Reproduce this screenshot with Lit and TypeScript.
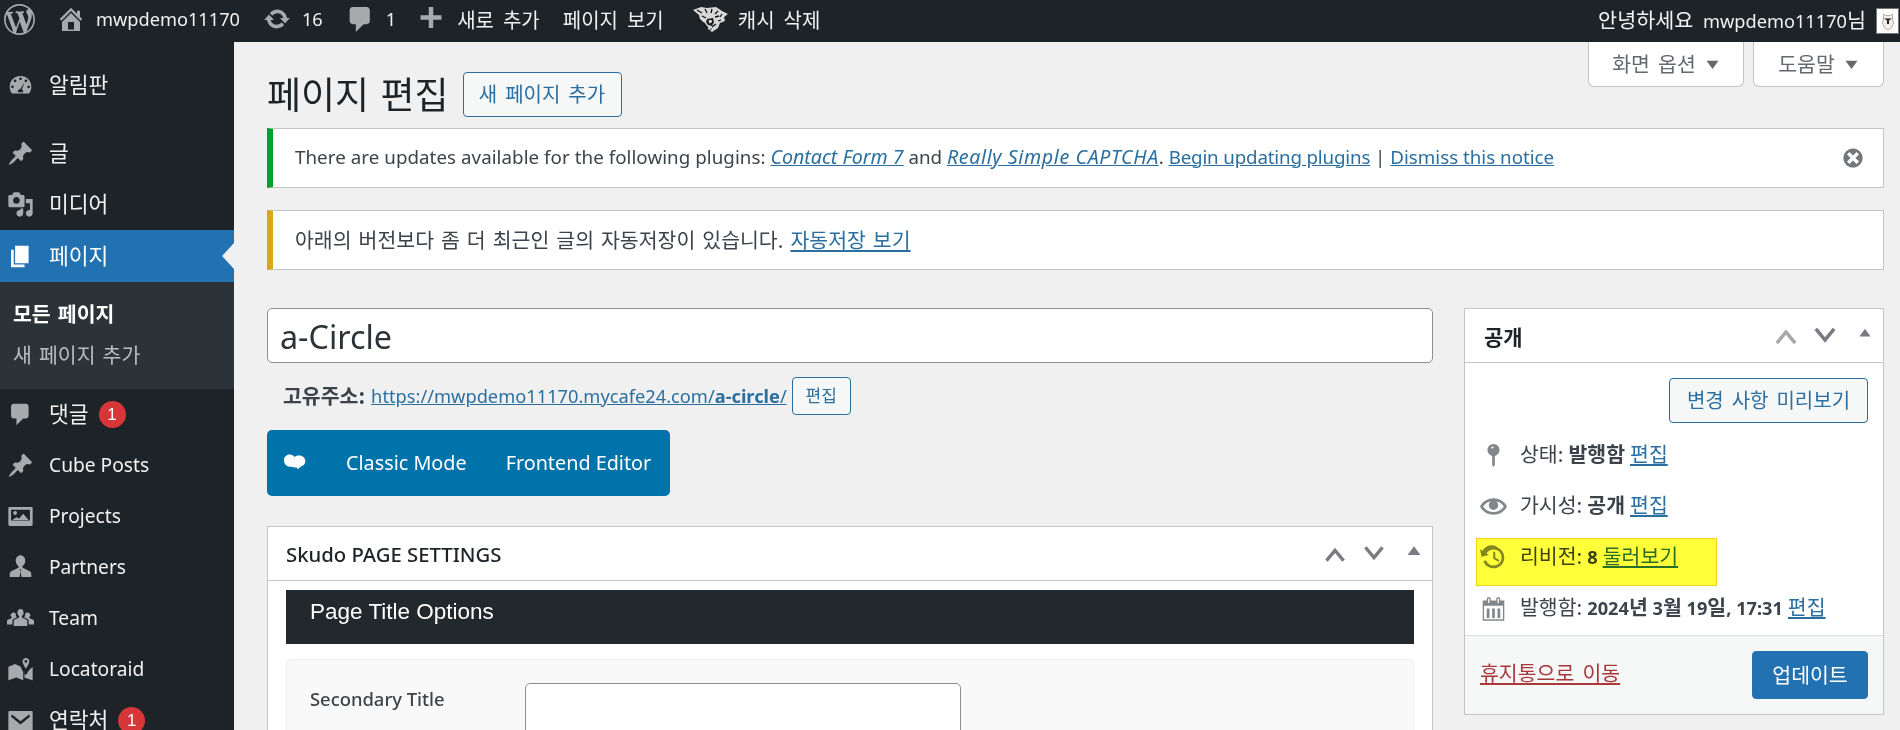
import { LitElement, html, css, svg } from "lit";
import { customElement } from "lit/decorators.js";

const P: Record<string, string> = {
  wp: "M20 10c0-5.51-4.49-10-10-10C4.480 0 0 4.490 0 10c0 5.520 4.480 10 10 10 5.510 0 10-4.480 10-10zM7.780 15.370L4.370 6.220c.550-.020 1.170-.080 1.170-.080.500-.060.440-1.130-.060-1.110 0 0-1.450.110-2.370.110-.180 0-.370 0-.580-.010C4.120 2.690 6.890 1.110 10 1.110c2.320 0 4.430.880 6.020 2.320-.670-.110-1.620.390-1.620 1.540 0 .640.390 1.180.780 1.820.310.530.480 1.180.480 2.130 0 1.290-1.210 4.330-1.210 4.330l-2.620-7.220c.470-.020.720-.150.720-.150.500-.050.440-1.250-.060-1.220 0 0-1.440.120-2.370.12-.850 0-2.300-.120-2.300-.120-.5-.030-.56 1.200-.060 1.220l.920.080 1.260 3.410zM17.410 10c.240-.640.740-1.870.430-4.250.700 1.290 1.050 2.710 1.050 4.250 0 3.290-1.730 6.240-4.400 7.780.970-2.590 1.940-5.200 2.920-7.780zM6.100 18.090C3.120 16.650 1.110 13.530 1.110 10c0-1.300.230-2.480.72-3.590C3.250 10.300 4.670 14.200 6.100 18.090zm4.030-6.630l2.580 6.980c-.850.290-1.770.450-2.710.450-.790 0-1.570-.110-2.290-.330.810-2.380 1.620-4.740 2.420-7.100z",
  home: "M16 8.500l1.530 1.530-1.060 1.060L10 4.620l-6.470 6.470-1.060-1.060L10 2.500l4 4v-2h2v4zm-6-2.460l6 5.990V18H4v-5.970zM12 17v-5H8v5h4z",
  sync: "M10.200 3.280c3.530 0 6.430 2.610 6.920 6h2.080l-3.500 4-3.500-4h2.320c-.450-1.970-2.210-3.440-4.320-3.440-1.450 0-2.730.710-3.540 1.780L4.950 5.660C6.230 4.200 8.110 3.280 10.200 3.280zm-.400 13.440c-3.520 0-6.430-2.610-6.920-6H.800l3.500-4c1.170 1.330 2.330 2.670 3.500 4H5.480c.450 1.970 2.210 3.440 4.320 3.440 1.450 0 2.730-.710 3.540-1.780l1.710 1.950c-1.280 1.460-3.150 2.390-5.250 2.390z",
  comment: "M5 2h9c1.100 0 2 .9 2 2v7c0 1.100-.9 2-2 2h-2l-5 5v-5H5c-1.100 0-2-.9-2-2V4c0-1.100.9-2 2-2z",
  plus: "M17 7.500v3h-5.500V16h-3v-5.500H3v-3h5.500V2h3v5.500z",
  gauge: "M3.760 16h12.480C17.340 14.570 18 12.790 18 10.860 18 6.210 14.420 3 10 3S2 6.210 2 10.860C2 12.790 2.660 14.570 3.760 16zM10 4c.55 0 1 .45 1 1s-.45 1-1 1-1-.45-1-1 .45-1 1-1zM6 5.500c.55 0 1 .45 1 1s-.45 1-1 1-1-.45-1-1 .45-1 1-1zm8 0c.55 0 1 .45 1 1s-.45 1-1 1-1-.45-1-1 .45-1 1-1zM4 10c.55 0 1 .45 1 1s-.45 1-1 1-1-.45-1-1 .45-1 1-1zm12 0c.55 0 1 .45 1 1s-.45 1-1 1-1-.45-1-1 .45-1 1-1zm-3-2.500l-1.900 5.200c.55.400.9 1 .9 1.700 0 .15-.02.4-.05.6H8.050C8.020 15 8 14.750 8 14.400c0-1.050.85-1.900 1.900-1.900z",
  pin: "M10.440 3.020l1.820-1.820 6.360 6.350-1.830 1.820c-1.050-.680-2.480-.570-3.410.360l-.750.750c-.920.930-1.040 2.350-.350 3.400l-1.830 1.820-2.410-2.410-2.800 2.790c-.420.420-3.380 2.710-3.800 2.290s1.860-3.390 2.280-3.810l2.790-2.790L4.100 9.360l1.830-1.820c1.050.690 2.480.570 3.400-.360l.750-.750c.930-.920 1.050-2.350.360-3.410z",
  media: "M13 11V4c0-.550-.450-1-1-1h-1.670L9 1H5L3.670 3H2c-.550 0-1 .450-1 1v7c0 .550.450 1 1 1h10c.550 0 1-.450 1-1zM7 4.500c1.380 0 2.500 1.120 2.500 2.500S8.380 9.500 7 9.500 4.500 8.380 4.500 7 5.620 4.500 7 4.500zM14 6h5v10.500c0 1.380-1.120 2.500-2.500 2.500S14 17.880 14 16.500s1.120-2.500 2.500-2.500c.170 0 .340.020.5.050V9h-3V6zm-4 8.050V13h2v3.500c0 1.380-1.120 2.500-2.500 2.500S7 17.880 7 16.500 8.120 14 9.500 14c.170 0 .340.020.5.050z",
  page: "M6 15V2h10v13H6zm-1 1h8v2H3V5h2v11z",
  image: "M2 3h16c.6 0 1 .4 1 1v12c0 .6-.4 1-1 1H2c-.6 0-1-.4-1-1V4c0-.6.4-1 1-1zM3 5v8h14V5zM6 6c.8 0 1.400.6 1.400 1.400S6.800 8.800 6 8.800 4.600 8.200 4.600 7.400 5.200 6 6 6zM4 12.500l3-2 2 1 3-3.500 4 4.500z",
  man: "M10 1c2 0 3.500 1.700 3.500 4 0 1.700-.8 3.200-2 3.900v1.300l5 2.300c1 .5 1.500 1.500 1.500 2.500v2H2v-2c0-1 .5-2 1.500-2.500l5-2.300V8.900c-1.200-.7-2-2.200-2-3.900 0-2.300 1.500-4 3.500-4zM9.300 11.500l.7 1.200-.7 4.300h1.400l-.7-4.300.7-1.200z",
  team: "M10 3c1.300 0 2.300 1.200 2.300 2.700 0 1.100-.5 2-1.300 2.500v1l3.200 1.500c.5.200.8.700.8 1.300v3.500H5v-3.500c0-.6.300-1.100.8-1.300L9 9.200v-1C8.300 7.700 7.700 6.800 7.700 5.700 7.700 4.200 8.700 3 10 3zM4.800 5.500c.7 0 1.300.4 1.700 1-.1 1 .2 2 .8 2.700l-2.200 1c-.7.300-1.100 1-1.100 1.700v2.600H0V12c0-.5.300-.9.700-1l2.800-1.300v-.8C2.900 8.400 2.500 7.700 2.500 7.900 2.700 6.500 3.700 5.500 4.800 5.500zm10.400 0c1.100 0 2.100 1 2.300 2.400 0-.2-.4.500-1 1v.8l2.800 1.300c.4.100.7.500.7 1v2.500h-4v-2.600c0-.7-.4-1.400-1.100-1.700l-2.200-1c.6-.7.900-1.700.8-2.700.4-.6 1-1 1.700-1z",
  map: "M14 1.500c1.400 0 2.500 1.100 2.500 2.500 0 1.200-1.500 3.700-2.500 5.500-1-1.800-2.500-4.300-2.500-5.500 0-1.400 1.100-2.500 2.500-2.500zm0 1.500c-.6 0-1 .4-1 1s.4 1 1 1 1-.4 1-1-.4-1-1-1zM1 8l5-2 4 1.700c.4 1.200 1.200 2.600 2 4V18l-5-2-6 2zm12 4.700c.4.600.7 1 1 1.500.5-.7 1.300-2 2-3.300L19 8v10l-6-1.800z",
  mail: "M2 3h16c.6 0 1 .4 1 1v13c0 .6-.4 1-1 1H2c-.6 0-1-.4-1-1V4c0-.6.400-1 1-1zm1.800 2.500L2.800 7l7.200 6 7.200-6-1-1.500L10 10.500z",
  dismiss: "M10 2c4.420 0 8 3.580 8 8s-3.580 8-8 8-8-3.580-8-8 3.580-8 8-8zm5 11l-3-3 3-3-2-2-3 3-3-3-2 2 3 3-3 3 2 2 3-3 3 3z",
  status: "M14.500 6c0-2.400-2-4.500-4.500-4.500S5.500 3.600 5.500 6c0 2 1.400 3.800 3.500 4.300V17l1 1.500 1-1.500v-6.700c2.100-.5 3.500-2.300 3.500-4.300zM8 4.200c.6-.6 1.300-.9 2-.9v1.200c-.4 0-.8.200-1.100.5z",
  eye: "M19.700 9.400C17.700 6 14 3.900 10 3.900S2.300 6 .3 9.400L0 10l.3.600c2 3.400 5.700 5.500 9.700 5.500s7.700-2.100 9.700-5.500l.3-.6-.3-.6zM10 14.100c-3.100 0-6-1.600-7.700-4.100C3.600 8 5.700 6.600 8 6.100c-.9.600-1.500 1.700-1.500 2.900 0 1.900 1.600 3.500 3.500 3.500s3.500-1.600 3.500-3.500c0-1.200-.6-2.300-1.500-2.900 2.300.5 4.400 1.900 5.700 3.900-1.700 2.500-4.600 4.100-7.700 4.100z",
  backup: "M13.650 2.880c3.930 2.010 5.480 6.820 3.470 10.750s-6.830 5.480-10.760 3.470c-1.870-.960-3.200-2.540-3.860-4.360l1.880-.700c.510 1.370 1.500 2.560 2.890 3.270 2.940 1.510 6.560.340 8.060-2.600 1.510-2.940.340-6.560-2.600-8.060-2.880-1.480-6.390-.390-7.950 2.440L6.620 8.100l-5.500 1.400L0 3.840l1.880 1.120C3.970 1.360 8.300-.080 11.880 1.750zM9.800 5.800h1.500v4.260l3.100 1.770-.75 1.300-3.850-2.210z",
  cal: "M15 4h3v15H2V4h3V3c0-.41.15-.76.44-1.060.29-.29.64-.44 1.060-.44s.77.15 1.060.44c.29.3.44.65.44 1.060v1h4V3c0-.41.15-.76.44-1.060.29-.29.64-.44 1.060-.44s.77.15 1.060.44c.29.3.44.65.44 1.060v1zM6 3v2.500c0 .14.05.26.15.35.09.1.21.15.35.15s.26-.05.35-.15c.1-.09.15-.21.15-.35V3c0-.14-.05-.26-.15-.35-.09-.1-.21-.15-.35-.15s-.26.05-.35.15c-.1.09-.15.21-.15.35zm7 0v2.500c0 .14.05.26.14.35.1.1.22.15.36.15s.26-.05.36-.15c.09-.09.14-.21.14-.35V3c0-.14-.05-.26-.14-.35-.1-.1-.22-.15-.36-.15s-.26.05-.36.15c-.09.09-.14.21-.14.35zm4 15V8H3v10h14zM5 10h2v7H5zm4 0h2v7H9zm4 0h2v7h-2z",
  up: "M3 14L10 5.500 17 14l-1.800 1.500L10 9.200l-5.200 6.300z",
  down: "M3 6L10 14.500 17 6l-1.800-1.500L10 10.800 4.800 4.500z",
  tri: "M10 4l8 11H2z",
  triDown: "M10 16L2 5h16z",
  cloud: "M6.500 4.500c1.300 0 2.300.6 3 1.500.7-.6 1.600-.9 2.700-.9 2.200 0 3.800 1.500 3.800 3.400 0 1.800-1.200 3-3 3.400l-1.500 1.600-1-1.200c-.9.200-2 .2-2.700-.3C5 12.300 3 10.500 3 8c0-2 1.500-3.500 3.500-3.500z",
};

const icon = (name: string, cls = "") =>
  html`<svg class="ic ${cls}" viewBox="0 0 20 20" aria-hidden="true">${svg`<path d=${P[name]}></path>`}</svg>`;

@customElement("app-root")
export class AppRoot extends LitElement {
  static styles = css`
    :host {
      display: block;
      width: 1900px;
      height: 730px;
      overflow: hidden;
      position: relative;
      background: #f0f0f1;
      font-family: "Noto Sans", "Noto Sans CJK KR", sans-serif;
      color: #3c434a;
      font-size: 18px;
    }
    a { color: #2a6f9f; text-decoration: underline; }
    .ic { fill: currentColor; display: block; flex: none; }
    .ko { font-family: "Noto Sans CJK KR", sans-serif; font-size: 20.5px; word-spacing: 3.5px; }

    .bar { height: 42px; box-sizing: border-box; padding-bottom: 4px; background: #1d2327; color: #f0f0f1; display: flex; align-items: center; font-size: 18.2px; white-space: nowrap; }
    .bar .ic { color: #a7aaad; }
    .bar .ko { font-size: 20px; word-spacing: 4.5px; }
    .bar-r { margin-left: auto; display: flex; align-items: center; }
    .wp { width: 31px; height: 31px; margin-left: 4px; }
    .home { width: 30px; height: 30px; margin-left: 21px; }
    .site { margin-left: 10px; }
    .sync { width: 28px; height: 28px; margin-left: 23px; }
    .n16 { margin-left: 11px; }
    .cmt { width: 31px; height: 31px; margin-left: 22px; }
    .n1 { margin-left: 10px; }
    .plus { width: 30px; height: 30px; margin-left: 20px; }
    .add { margin-left: 11px; }
    .view { margin-left: 23px; }
    .tiger { margin-left: 29px; width: 35px; height: 26px; flex: none; }
    .cache { margin-left: 10px; }
    .hello { margin-right: 10px; word-spacing: 5px; }
    .bar .hello .ko { font-size: 20.7px; }
    .avatar { width: 23px; height: 26px; margin: 4px 1px 0 0; background: #fff; border: 1px solid #777; box-sizing: border-box; display: flex; justify-content: center; align-items: center; }

    .wrap { display: flex; height: 688px; }
    .side { width: 234px; flex: none; background: #1d2327; padding-top: 18px; box-sizing: border-box; }
    .it { height: 51px; display: flex; align-items: center; color: #f0f0f1; font-size: 19.2px; position: relative; }
    .it .ko { font-size: 21.5px; margin-bottom: 4px; }
    .it .lat { margin-bottom: 2px; }
    .it .ic { width: 27px; height: 27px; color: #a7aaad; margin-left: 7px; margin-right: 15px; }
    .sep { margin-bottom: 17px; }
    .it.on { background: #2271b1; color: #fff; height: 52px; }
    .it.on .ic { color: #fff; }
    .it.on::after { content: ""; position: absolute; right: 0; top: 13px; border: 13px solid transparent; border-right: 12px solid #f0f0f1; border-left: 0; }
    .sub { background: #2c3338; height: 107px; box-sizing: border-box; padding: 17px 0 0 13px; display: flex; flex-direction: column; gap: 13px; color: rgba(240,246,252,.7); }
    .sub span { line-height: 28px; word-spacing: 2.5px; }
    .sub .cur { color: #fff; font-weight: 700; }
    .badge { margin-left: 10px; width: 27px; height: 27px; border-radius: 50%; background: #d63638; color: #fff; font-size: 17px; display: flex; align-items: center; justify-content: center; font-family: "Liberation Sans", sans-serif; }

    .main { flex: 1; min-width: 0; padding: 0 16px 0 33px; position: relative; }
    .tabs { position: absolute; top: 0; right: 16px; display: flex; gap: 9px; }
    .tab { height: 45px; box-sizing: border-box; padding-bottom: 3px; background: #fff; border: 1px solid #c3c4c7; border-top: 0; border-radius: 0 0 6px 6px; color: #646970; display: flex; align-items: center; justify-content: center; gap: 9px; }
    .tab.a { width: 156px; }
    .tab.b { width: 131px; }
    .tab .ic { width: 15px; height: 15px; margin-top: 3px; }
    .head { display: flex; align-items: center; height: 86px; box-sizing: border-box; padding-top: 16px; gap: 14px; }
    h1.ko { margin: 0; font-weight: 400; font-size: 37px; word-spacing: 3px; color: #1d2327; line-height: 1.2; }
    .btn { box-sizing: border-box; padding-bottom: 3px; display: flex; align-items: center; justify-content: center; border: 1px solid #2a6f9f; background: #f6f7f7; color: #2a6f9f; border-radius: 4px; white-space: nowrap; }
    .newp.ko { width: 159px; height: 45px; margin-top: 3px; font-size: 20px; }
    .notice { box-sizing: border-box; height: 60px; background: #fff; border: 1px solid #c3c4c7; border-left: 6px solid #00a32a; display: flex; align-items: center; padding-left: 22px; font-size: 18.75px; margin-bottom: 22px; }
    .notice > span { margin-bottom: 4px; }
    .notice .lead { letter-spacing: .05px; }
    .notice .begin { letter-spacing: -.17px; }
    .notice.warn { border-left-color: #dba617; margin-bottom: 38px; }
    .notice.warn > span { margin-bottom: 2px; word-spacing: 2.4px; }
    .notice em { font-style: italic; font-size: 19.6px; }
    .notice em.w { letter-spacing: .62px; }
    .notice .x { width: 24px; height: 24px; margin-left: auto; margin-right: 18px; color: #72777c; }

    .cols { display: flex; gap: 31px; }
    .left { flex: 1; min-width: 0; }
    .right { width: 420px; flex: none; }
    .title { box-sizing: border-box; height: 55px; background: #fff; border: 1px solid #8c8f94; border-radius: 5px; display: flex; align-items: center; padding-left: 12px; font-size: 32.3px; color: #2c3338; }
    .perma { display: flex; align-items: center; height: 38px; margin: 14px 0 15px 16px; font-size: 18.25px; white-space: nowrap; }
    .perma b { font-weight: 700; margin: 0 6px 3px 0; }
    .perma a { margin-bottom: 2px; }
    .perma .sm { width: 59px; height: 38px; margin-left: 5px; }
    .perma .sm.ko { font-size: 17px; }
    .ve { width: 403px; height: 66px; background: #0073aa; border-radius: 5px; display: flex; align-items: center; color: #fff; font-size: 19.8px; white-space: nowrap; margin-bottom: 30px; }
    .ve .ic { width: 33px; height: 33px; margin-left: 12px; }
    .ve .c { margin: 0 0 2px 34px; }
    .ve .f { margin: 0 0 2px 39px; }
    .box { background: #fff; border: 1px solid #c3c4c7; box-sizing: border-box; }
    .bh { height: 54px; box-sizing: border-box; border-bottom: 1px solid #c3c4c7; display: flex; align-items: center; color: #1d2327; font-size: 20.3px; font-weight: 500; padding-left: 18px; }
    .ctl { margin-left: auto; display: flex; align-items: center; color: #787c82; }
    .ctl .ic { width: 28px; height: 28px; margin-left: 11px; }
    .ctl .ic.dim { color: #a7aaad; }
    .ctl .ic.t { width: 16px; height: 16px; margin: -6px 10px 0 18px; }
    .opts { background: #23282d; height: 54px; margin: 9px 18px 15px; color: #fff; font-family: "Liberation Sans", sans-serif; font-size: 22.5px; display: flex; align-items: center; padding: 0 24px 10px; box-sizing: border-box; }
    .field { margin: 0 18px; height: 100px; background: #f9f9f9; border: 1px solid #eee; border-radius: 5px 5px 0 0; padding: 23px 0 0 23px; box-sizing: border-box; display: flex; }
    .field span { width: 215px; font-size: 18.4px; line-height: 32px; color: #3c434a; font-weight: 500; }
    .field i { display: block; width: 436px; height: 70px; background: #fff; border: 1px solid #8c8f94; border-radius: 5px; box-sizing: border-box; }

    .pub { height: 407px; display: flex; flex-direction: column; }
    .pub .bh { padding-left: 19px; }
    .pub .bh .ko { font-size: 21px; font-weight: 700; }
    .pub .ctl .ic { margin-left: 9px; width: 30px; height: 30px; }
    .pub .ctl .ic.t { margin: -5px 11px 0 18px; width: 14px; height: 14px; }
    .pb { flex: 1; padding: 15px 15px 0; position: relative; }
    .prev.ko { margin-left: auto; width: 199px; height: 45px; font-size: 20px; }
    .rows { margin-top: 7px; }
    .row { height: 51px; display: flex; align-items: center; font-size: 18.2px; white-space: nowrap; }
    .row .ic { width: 27px; height: 27px; color: #82878c; margin-right: 13px; }
    .tx { margin-bottom: 6px; }
    .row b { margin: 0 5px; }
    .mark { position: absolute; left: 11px; top: 175px; width: 241px; height: 48px; box-sizing: border-box; background: #ffff3a; border: 1px solid #f2d21a; mix-blend-mode: multiply; }
    .pf { height: 79px; box-sizing: border-box; background: #f6f7f7; border-top: 1px solid #dcdcde; display: flex; align-items: center; justify-content: space-between; padding: 0 15px; }
    .pf a { color: #a8383a; margin-bottom: 6px; }
    .upd { width: 116px; height: 48px; background: #2271b1; color: #fff; border-color: #2271b1; }
  `;

  private navItem(ic: string, label: string) {
    return html`<div class="it">${icon(ic)}<span class="lat">${label}</span></div>`;
  }

  render() {
    return html`
      <div class="bar">
        ${icon("wp", "wp")}
        ${icon("home", "home")}
        <span class="site">mwpdemo11170</span>
        ${icon("sync", "sync")}
        <span class="n16">16</span>
        ${icon("comment", "cmt")}
        <span class="n1">1</span>
        ${icon("plus", "plus")}
        <span class="add ko">새로 추가</span>
        <span class="view ko">페이지 보기</span>
        <svg class="tiger" viewBox="0 0 35 26" aria-hidden="true">
          <path d="M0 4L8 1l6 1 9-1 6 4 6 3-4 3 1 4-5 2-2 5-6 4-4-3-3-6-5-3-1-5z" fill="#d8d8d8"></path>
          <g fill="none" stroke="#111" stroke-width="1.300">
            <path d="M4 4l5 3M12 3l2 4M19 3l-1 4M25 5l-3 3M9 10l4 2M22 11l4-1M29 8l-2 3M6 13l3 3M28 14l-3 1M23 18l-4 3M12 19l3 3"></path>
          </g>
          <path d="M14 13l6-1 1 4-2 4-4-1-2-3z" fill="#1a1a1a"></path>
          <path d="M15.500 14.500l3-.5.5 2-2.500 1.500z" fill="#eee"></path>
          <path d="M16 23l3-1-1 3z" fill="#666"></path>
        </svg>
        <span class="cache ko">캐시 삭제</span>
        <div class="bar-r">
          <span class="hello"><span class="ko">안녕하세요</span> mwpdemo11170<span class="ko">님</span></span>
          <div class="avatar">
            <svg width="16" height="20" viewBox="0 0 16 20" aria-hidden="true">
              <path d="M3.500 3l2 1.500h5l2-1.500v5l1 4-2 5-3.500 2-3.500-2-2-5 1-4z" fill="#f2f0e8" stroke="#b5b09e" stroke-width="1"></path>
              <path d="M4 7.500h8L9 9.500v3.500H7V9.500z" fill="#1d2327"></path>
            </svg>
          </div>
        </div>
      </div>
      <div class="wrap">
        <nav class="side">
          <div class="it sep">${icon("gauge")}<span class="ko">알림판</span></div>
          <div class="it">${icon("pin")}<span class="ko">글</span></div>
          <div class="it">${icon("media")}<span class="ko">미디어</span></div>
          <div class="it on">${icon("page")}<span class="ko">페이지</span></div>
          <div class="sub">
            <span class="cur ko">모든 페이지</span>
            <span class="ko">새 페이지 추가</span>
          </div>
          <div class="it">${icon("comment")}<span class="ko">댓글</span><span class="badge">1</span></div>
          ${this.navItem("pin", "Cube Posts")}
          ${this.navItem("image", "Projects")}
          ${this.navItem("man", "Partners")}
          ${this.navItem("team", "Team")}
          ${this.navItem("map", "Locatoraid")}
          <div class="it">${icon("mail")}<span class="ko">연락처</span><span class="badge">1</span></div>
        </nav>
        <main class="main">
          <div class="tabs">
            <div class="tab a ko">화면 옵션 ${icon("triDown")}</div>
            <div class="tab b ko">도움말 ${icon("triDown")}</div>
          </div>
          <div class="head">
            <h1 class="ko">페이지 편집</h1>
            <div class="btn newp ko">새 페이지 추가</div>
          </div>
          <div class="notice">
            <span><span class="lead">There are updates available for the following plugins:</span> <a href="#"><em>Contact Form 7</em></a> and <a href="#"><em class="w">Really Simple CAPTCHA</em></a>. <a class="begin" href="#">Begin updating plugins</a> | <a href="#">Dismiss this notice</a></span>
            ${icon("dismiss", "x")}
          </div>
          <div class="notice warn">
            <span class="ko">아래의 버전보다 좀 더 최근인 글의 자동저장이 있습니다. <a href="#">자동저장 보기</a></span>
          </div>
          <div class="cols">
            <div class="left">
              <div class="title">a-Circle</div>
              <div class="perma">
                <b class="ko">고유주소:</b>
                <a href="#">https://mwpdemo11170.mycafe24.com/<strong>a-circle</strong>/</a>
                <div class="btn sm ko">편집</div>
              </div>
              <div class="ve">
                ${icon("cloud")}
                <span class="c">Classic Mode</span>
                <span class="f">Frontend Editor</span>
              </div>
              <div class="box">
                <div class="bh">
                  <span>Skudo PAGE SETTINGS</span>
                  <div class="ctl">${icon("up")}${icon("down")}${icon("tri", "t")}</div>
                </div>
                <div class="opts">Page Title Options</div>
                <div class="field"><span>Secondary Title</span><i></i></div>
              </div>
            </div>
            <div class="right">
              <div class="box pub">
                <div class="bh">
                  <span class="ko">공개</span>
                  <div class="ctl">${icon("up", "dim")}${icon("down")}${icon("tri", "t")}</div>
                </div>
                <div class="pb">
                  <div class="btn prev ko">변경 사항 미리보기</div>
                  <div class="rows">
                    <div class="row">${icon("status")}<span class="tx"><span class="ko">상태:</span><b class="ko">발행함</b><a class="ko" href="#">편집</a></span></div>
                    <div class="row">${icon("eye")}<span class="tx"><span class="ko">가시성:</span><b class="ko">공개</b><a class="ko" href="#">편집</a></span></div>
                    <div class="row">${icon("backup")}<span class="tx"><span class="ko">리비전:</span><b>8</b><a class="ko" href="#">둘러보기</a></span></div>
                    <div class="row">${icon("cal")}<span class="tx"><span class="ko">발행함:</span><b>2024<span class="ko">년</span> 3<span class="ko">월</span> 19<span class="ko">일</span>, 17:31</b><a class="ko" href="#">편집</a></span></div>
                  </div>
                  <div class="mark"></div>
                </div>
                <div class="pf">
                  <a class="ko" href="#">휴지통으로 이동</a>
                  <div class="btn upd ko">업데이트</div>
                </div>
              </div>
            </div>
          </div>
        </main>
      </div>
    `;
  }
}
